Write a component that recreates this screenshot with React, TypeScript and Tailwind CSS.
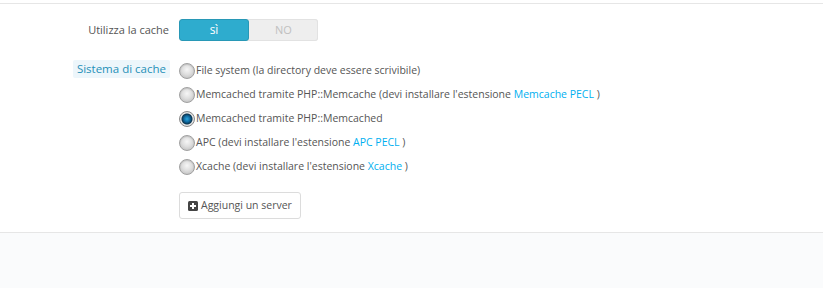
import React from "react";

function Radio({ checked }: { checked?: boolean }) {
  if (checked) {
    return (
      <span className="inline-block w-[16px] h-[16px] rounded-full shrink-0 border border-[#8a8a8a] bg-[radial-gradient(circle_at_50%_50%,#2aa7e0_0,#0f6aa0_3px,#0b3550_5px,#e8e8e8_6px,#d0d0d0_8px)]" />
    );
  }
  return (
    <span className="inline-block w-[16px] h-[16px] rounded-full shrink-0 border border-[#a0a0a0] bg-[radial-gradient(circle_at_50%_40%,#f6f6f6_0,#dedede_5px,#cacaca_8px)] shadow-[inset_0_1px_1px_rgba(0,0,0,0.12)]" />
  );
}

function Option({ checked, text, link }: { checked?: boolean; text: string; link?: string }) {
  return (
    <div className="flex items-center h-[24px]">
      <Radio checked={checked} />
      <span className="ml-[1px] text-[10.5px] text-[#555] whitespace-nowrap">
        {text}
        {link && (
          <>
            {" "}
            <span className="text-[#00aff0]">{link}</span> )
          </>
        )}
      </span>
    </div>
  );
}

export default function App() {
  return (
    <div className="w-[823px] h-[288px] bg-[#fafbfc] font-['Open_Sans',sans-serif]">
      <div className="h-[3px] bg-white" />
      <div className="bg-white border-t border-b border-[#e6e6e6] h-[230px]">
        <div className="flex items-center mt-[15px]">
          <div className="w-[170px] text-right text-[11px] text-[#555] pr-[1px]">Utilizza la cache</div>
          <div className="ml-[9px] flex h-[22px] w-[139px] rounded-[3px] overflow-hidden bg-[#eee] shadow-[inset_0_0_0_1px_#e2e2e2]">
            <div className="w-[70px] bg-[#2eacce] border border-[#2898b6] rounded-[3px] text-white text-[12px] flex items-center justify-center">
              sì
            </div>
            <div className="flex-1 text-[#c0c0c0] text-[11px] flex items-center justify-center">NO</div>
          </div>
        </div>
        <div className="flex mt-[17px]">
          <div className="w-[170px] flex justify-end items-start pt-[2px]">
            <span className="bg-[#edf6fb] text-[#2590b8] text-[11.5px] px-[4px] py-[0px] rounded-[2px] leading-[18px]">
              Sistema di cache
            </span>
          </div>
          <div className="ml-[9px] pt-[1px] flex flex-col">
            <Option text="File system (la directory deve essere scrivibile)" />
            <Option text="Memcached tramite PHP::Memcache (devi installare l'estensione" link="Memcache PECL" />
            <Option checked text="Memcached tramite PHP::Memcached" />
            <Option text="APC (devi installare l'estensione" link="APC PECL" />
            <Option text="Xcache (devi installare l'estensione" link="Xcache" />
            <div className="mt-[13px]">
              <button className="h-[27px] px-[8px] border border-[#dcdcdc] rounded-[3px] bg-white flex items-center gap-[3px] text-[10.5px] text-[#555]">
                <svg width="10" height="10" viewBox="0 0 10 10">
                  <rect x="0" y="0" width="10" height="10" rx="1.5" fill="#444" />
                  <rect x="4" y="2" width="2" height="6" fill="#fff" />
                  <rect x="2" y="4" width="6" height="2" fill="#fff" />
                </svg>
                Aggiungi un server
              </button>
            </div>
          </div>
        </div>
      </div>
    </div>
  );
}
